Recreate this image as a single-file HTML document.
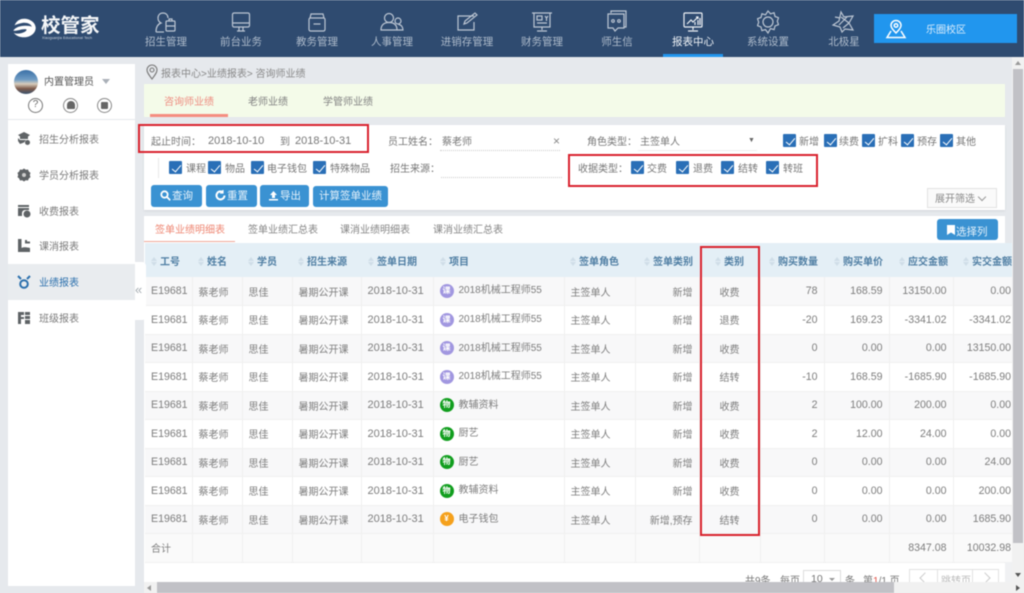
<!DOCTYPE html>
<html lang="zh"><head><meta charset="utf-8"><title>校管家</title>
<style>
*{box-sizing:border-box}
html,body{margin:0;padding:0;width:1024px;height:593px;overflow:hidden;background:#e6e9ed}
body{font-family:"Liberation Sans","Noto Sans CJK SC",sans-serif;font-size:10px;color:#777;position:relative}
.a{position:absolute}
.t{position:absolute;white-space:nowrap;line-height:14px}
.hd{position:absolute;left:0;top:0;width:1024px;height:57px;background:#2f4b70}
.nv{position:absolute;top:35px;width:76px;text-align:center;font-size:10.5px;line-height:14px;color:#aebbcb}
.ic{position:absolute;top:10px;fill:none;stroke:#bcc6d3;stroke-width:1.2}
.card{position:absolute;background:#fff}
.si{position:absolute;left:39px;font-size:10px;line-height:14px;color:#7b7b7b}
.c{position:absolute;width:13px;height:13px;background:#2a6fb7;border-radius:1px}
.c:after{content:"";position:absolute;left:4.5px;top:1.5px;width:4px;height:8px;border:solid #fff;border-width:0 1.4px 1.4px 0;transform:rotate(40deg)}
.btn{position:absolute;top:185px;height:22px;background:#3a92d2;border-radius:3px;color:#e6f2fb;text-align:center;line-height:22px;font-size:10.5px}
.btn svg{vertical-align:-2px;margin-right:1px}
.red{position:absolute;border:2px solid #d9232e;z-index:5}
table{position:absolute;left:145px;top:243px;border-collapse:collapse;table-layout:fixed;width:867px;background:#fff}
th{height:34px;background:#e4eff6;color:#4f7ea3;font-weight:700;font-size:10px;text-align:left;padding:0;border:0;white-space:nowrap}
th i{display:inline-block;width:6px;height:9px;vertical-align:-1px;margin-right:3px;position:relative}
th i:before{content:"";position:absolute;left:0;top:0;border:3px solid transparent;border-top:0;border-bottom:4px solid #cfdde8}
th i:after{content:"";position:absolute;left:0;top:5px;border:3px solid transparent;border-bottom:0;border-top:4px solid #cfdde8}
td{height:28.5px;padding:0 0 0 6px;border-right:1px solid #efefef;border-bottom:1px solid #f0f0f0;white-space:nowrap;overflow:hidden;color:#7d7d7d;font-size:10px}
td:last-child{border-right:0}
tr:nth-child(even) td{background:#f8f8f9}
td.d{font-size:11px}
td.e{font-size:10.6px}
td.r{text-align:right;padding:0 6px 0 0;font-size:10.6px}
td.s{text-align:right;padding:0 6px 0 0}
td.k{text-align:center;padding:0}
td.l{padding-right:1px;padding-left:0;text-align:right;font-size:10.6px}
tr:last-child td{background:#fafafa}
.p{display:inline-block;width:14px;height:14px;border-radius:50%;text-align:center;line-height:14px;font-size:8px;color:#fff;margin-right:5px;vertical-align:middle;position:relative;top:-1px;font-weight:700}
.p1{background:#a197e0}.p2{background:#119e1e}.p3{background:#f5a11c}
.n{position:relative;top:-1.5px}
</style></head><body>
<div style="position:absolute;left:0;top:0;width:1024px;height:593px;filter:blur(.5px)">

<div class="hd"></div>
<svg class="a" style="left:12px;top:18px" width="25" height="20" viewBox="0 0 29 27" preserveAspectRatio="none"><path d="M14 1C21 1 27 6 27.500 13C27.500 21 21 26 14 26C9 26 5 24 2 20C6 22 11 21 15 18.500C17 17 18 15 15 15C10 15 5 18 1.500 17C4 13 9 10.500 15 10.500C19 10.500 22 11 23 12C22 7 15 5 9 7.500C7 8 5 9 3 10C5 4 9 1 14 1Z" fill="#fff"/></svg>
<div class="t" style="left:41px;top:12px;font-size:19.5px;line-height:29px;font-weight:700;color:#f4f6f8">校管家</div>
<div class="t" style="left:42px;top:36px;font-size:3.500px;line-height:5px;color:#d5dbe3;letter-spacing:.15px">Xiaoguanjia Educational Tech</div>

<svg class="ic" style="left:155px" width="22" height="24" viewBox="0 0 22 24"><path d="M1 22c0-5 2-8 5-9-2-1-3-3-3-5 0-3 2-5 5-5s5 2 5 5"/><path d="M1 22h8"/><rect x="11" y="11" width="9" height="10" rx="1"/><path d="M11 16h9M14 11V9h3v2"/></svg>
<svg class="ic" style="left:231px" width="20" height="24" viewBox="0 0 20 24"><rect x="1.500" y="3" width="17" height="14" rx="1.500"/><path d="M1.500 13h17M6 21h8M8 17v4M12 17v4"/></svg>
<svg class="ic" style="left:307px" width="20" height="24" viewBox="0 0 20 24"><path d="M3 8l1-4h12l1 4"/><rect x="2" y="8" width="16" height="13" rx="1.500"/><path d="M6.500 14h7"/></svg>
<svg class="ic" style="left:380px" width="24" height="24" viewBox="0 0 24 24"><circle cx="9" cy="8" r="4.500"/><path d="M1 20c0-5 3-7.500 8-7.500s8 2.500 8 7.500z"/><circle cx="18" cy="11" r="3"/><path d="M17 20h6c0-3-2-5.500-4.500-5.500"/></svg>
<svg class="ic" style="left:456px" width="23" height="24" viewBox="0 0 23 24"><path d="M18 6H2v14h16v-8"/><path d="M8 14l1-3 10-8 2 2-10 8z"/></svg>
<svg class="ic" style="left:531px" width="22" height="24" viewBox="0 0 22 24"><path d="M1 3h20M3 3v14h16V3M5 17h12M11 17v3M6 21h10"/><rect x="6" y="6" width="5" height="4"/><path d="M6 13h10M14 6l1.500 2 1.500-2M15.500 8v3"/></svg>
<svg class="ic" style="left:606px" width="22" height="24" viewBox="0 0 22 24"><path d="M5 3V1h15v16h-2"/><path d="M2 4h16v14h-6l-3 3-2-3H2z"/><circle cx="7" cy="11" r="1.300"/><circle cx="13" cy="11" r="1.300"/></svg>
<svg class="ic" style="left:682px;stroke:#eef1f5" width="22" height="24" viewBox="0 0 22 24"><rect x="2" y="3" width="18" height="14" rx="1"/><path d="M11 17v3M6 21h10M5 14l4-4 2 2 5-5M14 7h2v2" /><path d="M13 15v-3M16 15v-5M18 15V8"/></svg>
<svg class="ic" style="left:757px" width="22" height="24" viewBox="0 0 22 24"><path d="M11 1l2.500 2.800 3.600-1 .9 3.700 3.500 1.200-1.200 3.500 1.200 3.500-3.500 1.200-.9 3.700-3.600-1L11 23l-2.500-3.400-3.600 1-.9-3.700-3.500-1.200 1.200-3.500L.5 8.700 4 7.500l.9-3.700 3.600 1z"/><circle cx="11" cy="12" r="5"/></svg>
<svg class="ic" style="left:832px" width="24" height="24" viewBox="0 0 24 24"><path d="M9 2l3 5 9-1-4 7 4 7-8-1-3 3-2-5-7-2 6-4z"/><path d="M3 7l5 1M17 13l-6 5M9 7l8 6M7 15l8-8"/></svg>

<div class="nv" style="left:128px">招生管理</div>
<div class="nv" style="left:203px">前台业务</div>
<div class="nv" style="left:279px">教务管理</div>
<div class="nv" style="left:354px">人事管理</div>
<div class="nv" style="left:429px">进销存管理</div>
<div class="nv" style="left:504px">财务管理</div>
<div class="nv" style="left:579px">师生信</div>
<div class="nv" style="left:655px;color:#eef2f6">报表中心</div>
<div class="nv" style="left:730px">系统设置</div>
<div class="nv" style="left:806px">北极星</div>
<div class="a" style="left:663px;top:54px;width:60px;height:3px;background:#2196ee"></div>

<div class="a" style="left:874px;top:14px;width:143px;height:29px;background:#2196ee"></div>
<svg class="a" style="left:885px;top:19px;fill:none;stroke:#fff;stroke-width:1.500" width="22" height="20" viewBox="0 0 22 20"><path d="M11 14C8 11 6 8.500 6 6.500a5 5 0 0 1 10 0C16 8.500 14 11 11 14z"/><circle cx="11" cy="6.500" r="1.800"/><path d="M6 12L2 18.500h18L16 12"/></svg>
<div class="t" style="left:926px;top:24px;font-size:10px;color:#dcedfb">乐圈校区</div>

<div class="card" style="left:8px;top:64px;width:127px;height:522px"></div>
<div class="a" style="left:14px;top:70px;width:24px;height:24px;border-radius:50%;background:linear-gradient(180deg,#3a6fa6 0,#6f9cc4 40%,#d8cdbb 58%,#7d5a4b 78%,#39526e 100%)"></div>
<div class="t" style="left:44px;top:76px;color:#555">内置管理员</div>
<div class="a" style="left:102px;top:79px;border:4px solid transparent;border-top:5px solid #aab0b8;border-bottom:0"></div>
<div class="a" style="left:28px;top:98px;width:15px;height:15px;border:1.200px solid #777;border-radius:50%;text-align:center;line-height:12px;font-size:10px;color:#666">?</div>
<div class="a" style="left:63px;top:98px;width:15px;height:15px;border:1.200px solid #888;border-radius:50%"></div>
<div class="a" style="left:66.500px;top:101px;width:8px;height:8px;background:#666;border-radius:4px 4px 1px 1px"></div>
<div class="a" style="left:97px;top:98px;width:15px;height:15px;border:1.200px solid #888;border-radius:50%"></div>
<div class="a" style="left:101px;top:102px;width:7px;height:7px;background:#666;border-radius:1px"></div>
<div class="a" style="left:8px;top:119px;width:127px;height:1px;background:#e6e9ed"></div>

<div class="a" style="left:8px;top:264px;width:127px;height:36px;background:#e9ecef"></div>
<svg class="a" style="left:17px;top:132px" width="14" height="14" viewBox="0 0 14 14" fill="#5f6366"><path d="M7 0l6 3-2 1.500V7H3V4.500L1 3z"/><path d="M1 6l2 2h6l-2 2.500L3 12 1 9z"/><circle cx="10.500" cy="10.500" r="2.500"/></svg>
<svg class="a" style="left:17px;top:168px" width="14" height="14" viewBox="0 0 14 14" fill="#5f6366"><path d="M7 .5l1.800 1.300 2.200-.3.800 2 1.700 1.400-.7 2.100.7 2.100-1.700 1.400-.8 2-2.200-.3L7 13.500l-1.800-1.300-2.200.3-.8-2L.5 9.100l.7-2.100-.7-2.100 1.700-1.400.8-2 2.200.3z"/><circle cx="7" cy="7" r="2" fill="#ccc"/></svg>
<svg class="a" style="left:17px;top:204px" width="14" height="14" viewBox="0 0 14 14" fill="#5f6366"><path d="M1 1h11v2H1zM1 4h11v2H8a3 3 0 0 0-3 3v3H1z"/><circle cx="10" cy="10" r="3.500"/></svg>
<svg class="a" style="left:17px;top:239px" width="14" height="14" viewBox="0 0 14 14" fill="#5f6366"><path d="M1 0h3.500v9C6 8 9 8 13 9v4H1z"/><path d="M8 1h2v1.500h3v2H8z"/></svg>
<svg class="a" style="left:17px;top:275px;fill:none;stroke:#2c70ad;stroke-width:2" width="14" height="14" viewBox="0 0 14 14"><circle cx="7" cy="9" r="3.800"/><path d="M1 1l3 3M13 1l-3 3"/></svg>
<svg class="a" style="left:17px;top:311px" width="14" height="14" viewBox="0 0 14 14" fill="#5f6366"><path d="M1 1h6v3H4v2h3v2H4v5H1zM8 1h5v3H8zM8 5h5v3H8zM8 9h5v4H8z"/></svg>
<div class="si" style="top:134px">招生分析报表</div>
<div class="si" style="top:170px">学员分析报表</div>
<div class="si" style="top:206px">收费报表</div>
<div class="si" style="top:241px">课消报表</div>
<div class="si" style="top:277px;color:#2c70ad">业绩报表</div>
<div class="si" style="top:313px">班级报表</div>

<div class="t" style="left:161px;top:68px;color:#888">报表中心&gt;业绩报表&gt; 咨询师业绩</div>
<svg class="a" style="left:146px;top:64px;fill:none;stroke:#777;stroke-width:1.100" width="12" height="16" viewBox="0 0 12 16"><path d="M6 15C3 11 1 8.500 1 6a5 5 0 0 1 10 0C11 8.500 9 11 6 15z"/><circle cx="6" cy="6" r="2"/></svg>

<div class="a" style="left:144px;top:84px;width:861px;height:33px;background:#f4fbe9"></div>
<div class="a" style="left:150px;top:114px;width:78px;height:3px;background:#f58d80"></div>
<div class="t" style="left:164px;top:96px;color:#ee8c80">咨询师业绩</div>
<div class="t" style="left:248px;top:96px;color:#828282">老师业绩</div>
<div class="t" style="left:323px;top:96px;color:#828282">学管师业绩</div>

<div class="card" style="left:144px;top:125px;width:861px;height:85px;box-shadow:0 1px 2px #d3d6da"></div>
<div class="t" style="left:151px;top:136px">起止时间：</div>
<div class="t" style="left:208px;top:134px;font-size:11px">2018-10-10</div>
<div class="t" style="left:280px;top:136px">到</div>
<div class="t" style="left:295px;top:134px;font-size:11px">2018-10-31</div>
<div class="t" style="left:388px;top:136px">员工姓名：</div>
<div class="t" style="left:442px;top:136px">蔡老师</div>
<div class="t" style="left:553px;top:134px;font-size:12px;color:#888">×</div>
<div class="a" style="left:440px;top:150px;width:120px;border-top:1px dotted #ccc"></div>
<div class="t" style="left:587px;top:136px">角色类型：</div>
<div class="t" style="left:640px;top:136px">主签单人</div>
<div class="t" style="left:748px;top:134px;font-size:7px;color:#666">▼</div>
<div class="a" style="left:638px;top:150px;width:119px;border-top:1px solid #eee"></div>
<div class="c" style="left:783px;top:134px"></div><div class="t" style="left:799px;top:136px">新增</div>
<div class="c" style="left:824px;top:134px"></div><div class="t" style="left:839px;top:136px">续费</div>
<div class="c" style="left:862px;top:134px"></div><div class="t" style="left:878px;top:136px">扩科</div>
<div class="c" style="left:901px;top:134px"></div><div class="t" style="left:917px;top:136px">预存</div>
<div class="c" style="left:940px;top:134px"></div><div class="t" style="left:956px;top:136px">其他</div>

<div class="a" style="left:158px;top:158px;width:1px;height:20px;background:#e8e8e8"></div>
<div class="c" style="left:169px;top:161px"></div><div class="t" style="left:186px;top:163px">课程</div>
<div class="c" style="left:208px;top:161px"></div><div class="t" style="left:225px;top:163px">物品</div>
<div class="c" style="left:251px;top:161px"></div><div class="t" style="left:267px;top:163px">电子钱包</div>
<div class="c" style="left:313px;top:161px"></div><div class="t" style="left:330px;top:163px">特殊物品</div>
<div class="t" style="left:390px;top:163px">招生来源：</div>
<div class="a" style="left:441px;top:177px;width:121px;border-top:1px dotted #ccc"></div>
<div class="t" style="left:578px;top:163px">收据类型：</div>
<div class="c" style="left:631px;top:161px"></div><div class="t" style="left:647px;top:163px">交费</div>
<div class="c" style="left:676px;top:161px"></div><div class="t" style="left:693px;top:163px">退费</div>
<div class="c" style="left:721px;top:161px"></div><div class="t" style="left:738px;top:163px">结转</div>
<div class="c" style="left:766px;top:161px"></div><div class="t" style="left:783px;top:163px">转班</div>

<div class="btn" style="left:151px;width:51px"><svg width="11" height="11" viewBox="0 0 11 11" fill="none" stroke="#fff" stroke-width="1.800"><circle cx="4.500" cy="4.500" r="3.200"/><path d="M7 7l3.200 3.200"/></svg>查询</div>
<div class="btn" style="left:206px;width:51px"><svg width="11" height="11" viewBox="0 0 11 11" fill="none" stroke="#fff" stroke-width="2"><path d="M9.500 5.500a4 4 0 1 1-1.500-3.200"/><path d="M8 0v3H5" stroke-width="1.200"/></svg>重置</div>
<div class="btn" style="left:260px;width:49px"><svg width="11" height="11" viewBox="0 0 11 11" fill="#fff"><path d="M5.500 1L9 5H7v3H4V5H2zM1 9h9v1.500H1z"/></svg>导出</div>
<div class="btn" style="left:313px;width:75px;top:186px;height:21px;line-height:21px">计算签单业绩</div>
<div class="a" style="left:927px;top:188px;width:70px;height:20px;border:1px solid #e2e2e2;background:#fafafa"></div>
<div class="t" style="left:935px;top:193px;color:#888">展开筛选</div>
<div class="a" style="left:979px;top:194px;width:6px;height:6px;border:solid #999;border-width:0 1px 1px 0;transform:rotate(45deg)"></div>

<div class="card" style="left:144px;top:216px;width:861px;height:27px"></div>
<div class="a" style="left:144px;top:241px;width:91px;height:1px;background:#f0a898"></div>
<div class="t" style="left:155px;top:224px;color:#ee8672">签单业绩明细表</div>
<div class="t" style="left:248px;top:224px;color:#858585">签单业绩汇总表</div>
<div class="t" style="left:340px;top:224px;color:#858585">课消业绩明细表</div>
<div class="t" style="left:433px;top:224px;color:#858585">课消业绩汇总表</div>
<div class="a" style="left:937px;top:219px;width:61px;height:21px;background:#3a92d2;border-radius:3px"></div>
<svg class="a" style="left:947px;top:225px" width="8" height="10" viewBox="0 0 8 10" fill="#fff"><path d="M0 0h8v10L4 7.500 0 10z"/></svg>
<div class="t" style="left:956px;top:225px;font-size:10.5px;color:#e6f2fb">选择列</div>

<div class="card" style="left:144px;top:243px;width:868px;height:340px"></div>
<table>
<colgroup><col style="width:47px"><col style="width:50px"><col style="width:50px"><col style="width:69px"><col style="width:72px"><col style="width:131px"><col style="width:71px"><col style="width:64px"><col style="width:61px"><col style="width:64px"><col style="width:65px"><col style="width:64px"><col style="width:59px"></colgroup>
<tr><th style="padding-left:6px"><i></i>工号</th><th style="padding-left:6px"><i></i>姓名</th><th style="padding-left:6px"><i></i>学员</th><th style="padding-left:6px"><i></i>招生来源</th><th style="padding-left:7px"><i></i>签单日期</th><th style="padding-left:7px"><i></i>项目</th><th style="padding-left:6px"><i></i>签单角色</th><th style="padding-left:9px"><i></i>签单类别</th><th style="padding-left:16px"><i></i>类别</th><th style="padding-left:9px"><i></i>购买数量</th><th style="padding-left:10px"><i></i>购买单价</th><th style="padding-left:10px"><i></i>应交金额</th><th style="padding-left:10px"><i></i>实交金额</th></tr>
<tr><td class="e">E19681</td><td>蔡老师</td><td>思佳</td><td>暑期公开课</td><td class="d">2018-10-31</td><td><span class="p p1">课</span><span class="n">2018机械工程师55</span></td><td>主签单人</td><td class="s">新增</td><td class="k">收费</td><td class="r">78</td><td class="r">168.59</td><td class="r">13150.00</td><td class="l">0.00</td></tr>
<tr><td class="e">E19681</td><td>蔡老师</td><td>思佳</td><td>暑期公开课</td><td class="d">2018-10-31</td><td><span class="p p1">课</span><span class="n">2018机械工程师55</span></td><td>主签单人</td><td class="s">新增</td><td class="k">退费</td><td class="r">-20</td><td class="r">169.23</td><td class="r">-3341.02</td><td class="l">-3341.02</td></tr>
<tr><td class="e">E19681</td><td>蔡老师</td><td>思佳</td><td>暑期公开课</td><td class="d">2018-10-31</td><td><span class="p p1">课</span><span class="n">2018机械工程师55</span></td><td>主签单人</td><td class="s">新增</td><td class="k">收费</td><td class="r">0</td><td class="r">0.00</td><td class="r">0.00</td><td class="l">13150.00</td></tr>
<tr><td class="e">E19681</td><td>蔡老师</td><td>思佳</td><td>暑期公开课</td><td class="d">2018-10-31</td><td><span class="p p1">课</span><span class="n">2018机械工程师55</span></td><td>主签单人</td><td class="s">新增</td><td class="k">结转</td><td class="r">-10</td><td class="r">168.59</td><td class="r">-1685.90</td><td class="l">-1685.90</td></tr>
<tr><td class="e">E19681</td><td>蔡老师</td><td>思佳</td><td>暑期公开课</td><td class="d">2018-10-31</td><td><span class="p p2">物</span><span class="n">教辅资料</span></td><td>主签单人</td><td class="s">新增</td><td class="k">收费</td><td class="r">2</td><td class="r">100.00</td><td class="r">200.00</td><td class="l">0.00</td></tr>
<tr><td class="e">E19681</td><td>蔡老师</td><td>思佳</td><td>暑期公开课</td><td class="d">2018-10-31</td><td><span class="p p2">物</span><span class="n">厨艺</span></td><td>主签单人</td><td class="s">新增</td><td class="k">收费</td><td class="r">2</td><td class="r">12.00</td><td class="r">24.00</td><td class="l">0.00</td></tr>
<tr><td class="e">E19681</td><td>蔡老师</td><td>思佳</td><td>暑期公开课</td><td class="d">2018-10-31</td><td><span class="p p2">物</span><span class="n">厨艺</span></td><td>主签单人</td><td class="s">新增</td><td class="k">收费</td><td class="r">0</td><td class="r">0.00</td><td class="r">0.00</td><td class="l">24.00</td></tr>
<tr><td class="e">E19681</td><td>蔡老师</td><td>思佳</td><td>暑期公开课</td><td class="d">2018-10-31</td><td><span class="p p2">物</span><span class="n">教辅资料</span></td><td>主签单人</td><td class="s">新增</td><td class="k">收费</td><td class="r">0</td><td class="r">0.00</td><td class="r">0.00</td><td class="l">200.00</td></tr>
<tr><td class="e">E19681</td><td>蔡老师</td><td>思佳</td><td>暑期公开课</td><td class="d">2018-10-31</td><td><span class="p p3">¥</span><span class="n">电子钱包</span></td><td>主签单人</td><td class="s">新增,预存</td><td class="k">结转</td><td class="r">0</td><td class="r">0.00</td><td class="r">0.00</td><td class="l">1685.90</td></tr>
<tr><td>合计</td><td></td><td></td><td></td><td></td><td></td><td></td><td></td><td></td><td></td><td></td><td class="r">8347.08</td><td class="l">10032.98</td></tr>
</table>

<div class="a" style="left:1005px;top:562px;width:7px;height:20px;background:#f0f1f3"></div>
<div class="t" style="left:745px;top:575px">共9条</div>
<div class="t" style="left:780px;top:575px">每页</div>
<div class="a" style="left:803px;top:570px;width:38px;height:18px;border:1px solid #ddd;padding-left:7px;line-height:17px;font-size:10.5px">10</div>
<div class="a" style="left:829px;top:578px;border:3px solid transparent;border-top:3px solid #999;border-bottom:0"></div>
<div class="t" style="left:845px;top:575px">条</div>
<div class="t" style="left:863px;top:575px">第<span style="color:#e2574c">1</span>/1 页</div>
<div class="a" style="left:909px;top:569px;width:90px;height:20px;border:1px solid #e2e2e2"></div>
<div class="a" style="left:937px;top:569px;width:36px;height:20px;border:solid #e2e2e2;border-width:0 1px"></div>
<div class="a" style="left:921px;top:574px;width:8px;height:8px;border:solid #ccc;border-width:1px 0 0 1px;transform:rotate(-45deg)"></div>
<div class="a" style="left:981px;top:574px;width:8px;height:8px;border:solid #ccc;border-width:1px 1px 0 0;transform:rotate(45deg)"></div>
<div class="t" style="left:941px;top:575px;color:#bbb">跳转页</div>

<div class="a" style="left:135px;top:262px;width:11px;height:58px;background:#fff;border-radius:0 4px 4px 0"></div>
<div class="t" style="left:135px;top:283px;font-size:13px;color:#a5acb2">«</div>

<div class="a" style="left:144px;top:582px;width:868px;height:11px;background:#f1f1f1"></div>
<div class="a" style="left:157px;top:582px;width:737px;height:11px;background:#c1c1c6"></div>
<div class="a" style="left:1012px;top:57px;width:12px;height:536px;background:#f1f1f1"></div>
<div class="a" style="left:1013px;top:69px;width:10px;height:474px;background:#c1c1c6"></div>
<div class="a" style="left:1015px;top:61px;border:3px solid transparent;border-bottom:4px solid #999;border-top:0"></div>
<div class="a" style="left:1015px;top:573px;border:3px solid transparent;border-top:4px solid #555;border-bottom:0"></div>
<div class="a" style="left:1016px;top:585px;border:3px solid transparent;border-left:4px solid #555;border-right:0"></div>
<div class="a" style="left:147px;top:585px;border:3px solid transparent;border-right:4px solid #999;border-left:0"></div>

<div class="red" style="left:138px;top:124px;width:231px;height:29px"></div>
<div class="red" style="left:568px;top:154px;width:250px;height:33px"></div>
<div class="red" style="left:700px;top:246px;width:60px;height:290px"></div>
</div>
</body></html>
